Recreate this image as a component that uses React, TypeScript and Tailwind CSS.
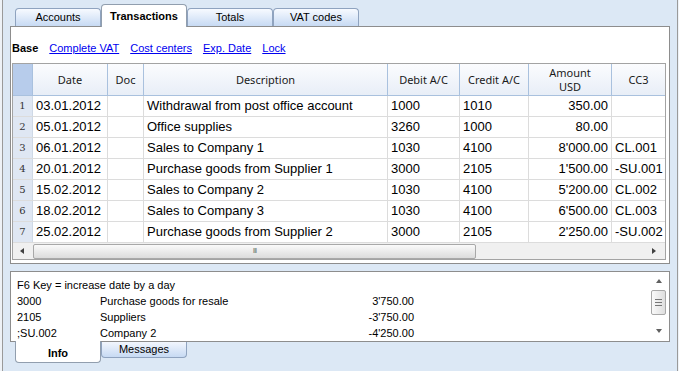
const cols = [
  { key: 'date', label: 'Date', w: 'w-[75px]' },
  { key: 'doc', label: 'Doc', w: 'w-[36px]' },
  { key: 'desc', label: 'Description', w: 'w-[244px]' },
  { key: 'debit', label: 'Debit A/C', w: 'w-[72px]' },
  { key: 'credit', label: 'Credit A/C', w: 'w-[69px]' },
  { key: 'amount', label: 'Amount\nUSD', w: 'w-[83px]' },
  { key: 'cc3', label: 'CC3', w: 'w-[53px]' },
];

const rows = [
  ['03.01.2012', '', 'Withdrawal from post office account', '1000', '1010', '350.00', ''],
  ['05.01.2012', '', 'Office supplies', '3260', '1000', '80.00', ''],
  ['06.01.2012', '', 'Sales to Company 1', '1030', '4100', "8'000.00", 'CL.001'],
  ['20.01.2012', '', 'Purchase goods from Supplier 1', '3000', '2105', "1'500.00", '-SU.001'],
  ['15.02.2012', '', 'Sales to Company 2', '1030', '4100', "5'200.00", 'CL.002'],
  ['18.02.2012', '', 'Sales to Company 3', '1030', '4100', "6'500.00", 'CL.003'],
  ['25.02.2012', '', 'Purchase goods from Supplier 2', '3000', '2105', "2'250.00", '-SU.002'],
];

const info = [
  ['3000', 'Purchase goods for resale', "3'750.00"],
  ['2105', 'Suppliers', "-3'750.00"],
  [';SU.002', 'Company 2', "-4'250.00"],
];

const topTabs = ['Accounts', 'Transactions', 'Totals', 'VAT codes'];
const links = ['Complete VAT', 'Cost centers', 'Exp. Date', 'Lock'];

function Tri({ dir }: { dir: 'l' | 'r' | 'u' | 'd' }) {
  const pts = { l: '5,1 1,4 5,7', r: '1,1 5,4 1,7', u: '1,6 4,2 7,6', d: '1,2 4,6 7,2' }[dir];
  return (
    <svg width="8" height="8" viewBox="0 0 8 8">
      <polygon points={pts} fill={dir === 'l' || dir === 'r' ? '#404040' : '#606060'} />
    </svg>
  );
}

export default function App() {
  return (
    <div className="w-[679px] h-[371px] bg-[#dce8f5] flex overflow-hidden font-['Liberation_Sans',Arial,sans-serif] text-black">
      {/* left window edge */}
      <div className="w-[2px] bg-[#eef2f7]" />
      <div className="w-[1px] bg-[#9a9a9a]" />

      <div className="w-[667px] pl-[7px] flex flex-col">
        {/* Top tabs */}
        <div className="h-[26px] flex items-end pl-[5px]">
          {topTabs.map((t, i) =>
            i === 1 ? (
              <div
                key={t}
                className="w-[86px] h-[23px] -mb-[1px] z-10 bg-white border border-b-0 border-[#919eae] rounded-t-[4px] flex items-start justify-center pt-[3px] text-[11px] font-bold"
              >
                {t}
              </div>
            ) : (
              <div
                key={t}
                className="w-[86px] h-[18px] bg-gradient-to-b from-[#f7faff] to-[#c7daf3] border border-b-0 border-[#8fa3bf] rounded-t-[4px] flex items-center justify-center text-[11px]"
              >
                {t}
              </div>
            )
          )}
        </div>

        {/* Main panel */}
        <div className="w-[660px] h-[238px] bg-white border border-[#8d8d8d] flex flex-col">
          <div className="h-[36px] pt-[14px] pl-[1px] flex items-start gap-[11px] text-[11px] leading-[14px]">
            <span className="font-bold">Base</span>
            {links.map(l => (
              <span key={l} className="text-[#0000f0] underline">{l}</span>
            ))}
          </div>

          <div className="ml-[1px] w-[654px] border border-[#a3a3a3] flex flex-col">
            {/* header */}
            <div className="h-[32px] flex border-b border-[#a9c1de] bg-gradient-to-b from-[#fbfcfe] to-[#e8eef7] font-['Noto_Sans',sans-serif] text-[11px] text-[#1a1a1a]">
              <div className="w-[20px] bg-[#b7cceb] border-r border-[#a9c1de]" />
              {cols.map(c => (
                <div
                  key={c.key}
                  className={`${c.w} border-r border-[#a9c1de] last:border-r-0 flex items-center justify-center text-center leading-[14px] px-[4px] whitespace-pre-line`}
                >
                  {c.label}
                </div>
              ))}
            </div>

            {/* body */}
            {rows.map((r, i) => (
              <div key={i} className="h-[21px] flex border-b border-[#dcdcdc] text-[13px] leading-[20px]">
                <div className="w-[20px] bg-[#dfe7f3] border-r border-[#cfd9e6] text-[10px] font-['DejaVu_Serif',serif] text-[#333] text-center">
                  {i + 1}
                </div>
                {r.map((v, j) => (
                  <div
                    key={j}
                    className={`${cols[j].w} border-r border-[#dcdcdc] last:border-r-0 px-[3px] whitespace-nowrap overflow-hidden ${j === 5 ? 'text-right' : ''}`}
                  >
                    {v}
                  </div>
                ))}
              </div>
            ))}

            {/* horizontal scrollbar */}
            <div className="h-[16px] flex items-center bg-[#f0f0f0]">
              <div className="w-[20px] flex justify-center">
                <Tri dir="l" />
              </div>
              <div className="w-[443px] h-[15px] rounded-[2px] border border-[#a8a8a8] bg-gradient-to-b from-[#fafafa] to-[#dcdcdc] flex items-center justify-center text-[8px] leading-[8px] text-[#777] tracking-[-1px]">
                III
              </div>
              <div className="flex-1" />
              <div className="w-[20px] flex justify-center">
                <Tri dir="r" />
              </div>
            </div>
          </div>
        </div>

        {/* Info box */}
        <div className="mt-[7px] w-[660px] h-[71px] bg-white border border-[#8d8d8d] flex text-[11px] leading-[16px]">
          <div className="flex-1 pl-[6px] pt-[5px]">
            <div>F6 Key = increase date by a day</div>
            {info.map(([a, b, c]) => (
              <div key={a} className="flex">
                <span className="w-[83px]">{a}</span>
                <span className="w-[200px]">{b}</span>
                <span className="w-[114px] text-right">{c}</span>
              </div>
            ))}
          </div>
          <div className="w-[17px] mr-[2px] flex flex-col items-center pt-[5px] pb-[6px]">
            <Tri dir="u" />
            <div className="mt-[5px] w-[15px] h-[25px] rounded-[2px] border border-[#a8a8a8] bg-gradient-to-r from-[#fafafa] to-[#dedede] flex flex-col items-center justify-center gap-[2px]">
              <div className="w-[7px] h-[1px] bg-[#777]" />
              <div className="w-[7px] h-[1px] bg-[#777]" />
              <div className="w-[7px] h-[1px] bg-[#777]" />
            </div>
            <div className="flex-1" />
            <Tri dir="d" />
          </div>
        </div>

        {/* Bottom tabs */}
        <div className="flex pl-[5px] items-start -mt-[1px]">
          <div className="w-[86px] h-[22px] bg-white border border-t-0 border-[#919eae] rounded-b-[4px] flex items-center justify-center pt-[3px] text-[11px] font-bold">
            Info
          </div>
          <div className="w-[86px] h-[16px] mt-[1px] bg-gradient-to-b from-[#f2f6fd] to-[#c7daf3] border border-t-0 border-[#8fa3bf] rounded-b-[4px] flex items-center justify-center text-[11px]">
            Messages
          </div>
        </div>
      </div>

      <div className="flex-1" />
      <div className="w-[1px] bg-[#9a9a9a]" />
      <div className="w-[1px] bg-[#eef2f7]" />
    </div>
  );
}
